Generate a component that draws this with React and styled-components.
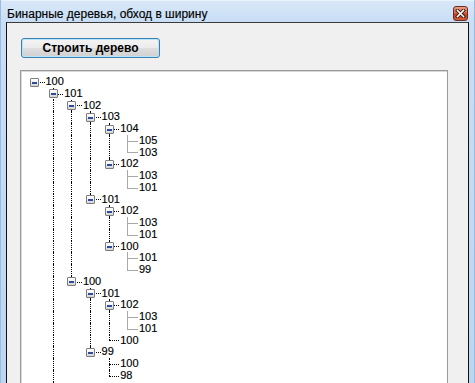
import React from 'react';
import styled, { createGlobalStyle } from 'styled-components';

const GlobalStyle = createGlobalStyle`
  html, body {
    margin: 0;
    padding: 0;
    width: 475px;
    height: 383px;
    overflow: hidden;
    background: #c6dcf3;
  }
  * { box-sizing: border-box; }
`;

const ROW_H = 11.76;
const INDENT = 18.7;
const VISIBLE_ROWS = 26;

const Window = styled.div`
  width: 475px;
  height: 383px;
  overflow: hidden;
  display: flex;
  flex-direction: column;
  padding: 0 6px;
  background: linear-gradient(180deg, #d9e8f8 0px, #c8def5 22px, #bcd6f1 100%);
  box-shadow: inset 1px 0 0 #9bbce0, inset -1px 0 0 #9bbce0, inset 0 1px 0 #eaf3fc;
`;

const TitleBar = styled.div`
  height: 22px;
  flex: none;
  display: flex;
  align-items: flex-end;
  justify-content: space-between;
  padding: 0 1px 0 1px;
`;

const Title = styled.div`
  font-family: "Liberation Sans", Arial, sans-serif;
  font-size: 12px;
  line-height: 16px;
  color: #000;
  white-space: nowrap;
  -webkit-text-stroke: 0.15px #000;
`;

const CloseButton = styled.div`
  width: 15px;
  height: 15px;
  margin-bottom: 1px;
  border: 1px solid #6e2a1c;
  border-radius: 3px;
  background: linear-gradient(180deg, #eb9c84 0%, #dc6a4c 45%, #c23e20 55%, #cf5a36 100%);
  display: flex;
  align-items: center;
  justify-content: center;
`;

const Client = styled.div`
  flex: 1;
  background: #f0f0f0;
  border: 1px solid #111;
  border-top-color: #3a3a3a;
  border-bottom: none;
  padding: 15px 20px 0 13px;
  display: flex;
  flex-direction: column;
  align-items: flex-start;
  min-height: 0;
`;

const BuildButton = styled.button`
  width: 139px;
  height: 20px;
  margin-left: 1px;
  padding: 0;
  border: 1px solid #3c7fb1;
  border-radius: 3px;
  background: linear-gradient(180deg, #f4f4f4 0%, #ececec 48%, #dedede 52%, #d0d0d0 100%);
  box-shadow: inset 0 0 0 1px #b6e6fb;
  font-family: "Liberation Sans", Arial, sans-serif;
  font-weight: bold;
  font-size: 12px;
  line-height: 18px;
  color: #000;
`;

const TreePanel = styled.div`
  margin-top: 12px;
  width: 428px;
  height: 340px;
  flex: none;
  background: #fff;
  border: 1px solid #9a9a9a;
  box-shadow: inset 1px 1px 0 #d8d8d8;
  padding: 5px 0 0 4px;
  overflow: hidden;
`;

const Row = styled.div`
  display: flex;
  height: ${ROW_H}px;
  align-items: stretch;
`;

const lineColor = (p) => (p.$faint ? '#a9a9a9' : '#000');
const lineStyle = (p) => (p.$faint ? 'solid' : 'dotted');

const Guide = styled.div`
  width: ${INDENT}px;
  flex: none;
  position: relative;
  &::before {
    content: '';
    display: ${(p) => (p.$line ? 'block' : 'none')};
    position: absolute;
    left: 9px;
    top: 0;
    bottom: 0;
    border-left: 1px ${lineStyle} ${lineColor};
  }
`;

const NodeCell = styled.div`
  width: 20.5px;
  flex: none;
  position: relative;
  &::before {
    content: '';
    display: ${(p) => (p.$up ? 'block' : 'none')};
    position: absolute;
    left: 9px;
    top: 0;
    height: 50%;
    border-left: 1px ${lineStyle} ${lineColor};
  }
  &::after {
    content: '';
    display: ${(p) => (p.$down ? 'block' : 'none')};
    position: absolute;
    left: 9px;
    top: 50%;
    bottom: 0;
    border-left: 1px ${lineStyle} ${lineColor};
  }
`;

const HLine = styled.span`
  position: absolute;
  left: 9px;
  right: 1px;
  top: 50%;
  border-top: 1px ${lineStyle} ${lineColor};
`;

const ExpandBox = styled.span`
  position: absolute;
  left: 5px;
  top: 1.5px;
  width: 9px;
  height: 9px;
  border: 1px solid #7c7c7c;
  border-radius: 1px;
  background: linear-gradient(180deg, #ffffff 0%, #f0f0f0 50%, #d2d2d2 100%);
  z-index: 1;
  &::after {
    content: '';
    position: absolute;
    left: 1px;
    top: 3px;
    width: 5px;
    height: 2px;
    background: #2f4c9c;
  }
`;

const Label = styled.span`
  font-family: "Liberation Sans", Arial, sans-serif;
  font-size: 11px;
  line-height: ${ROW_H}px;
  color: #000;
  white-space: nowrap;
  -webkit-text-stroke: 0.15px #000;
`;

const tree = {
  t: '100',
  c: [
    {
      t: '101',
      c: [
        {
          t: '102',
          c: [
            {
              t: '103',
              c: [
                { t: '104', c: [{ t: '105' }, { t: '103' }] },
                { t: '102', c: [{ t: '103' }, { t: '101' }] },
              ],
            },
            {
              t: '101',
              c: [
                { t: '102', c: [{ t: '103' }, { t: '101' }] },
                { t: '100', c: [{ t: '101' }, { t: '99' }] },
              ],
            },
          ],
        },
        {
          t: '100',
          c: [
            {
              t: '101',
              c: [
                { t: '102', c: [{ t: '103' }, { t: '101' }] },
                { t: '100' },
              ],
            },
            { t: '99', c: [{ t: '100' }, { t: '98' }] },
          ],
        },
      ],
    },
    {
      t: '99',
      c: [
        { t: '100', c: [{ t: '101' }, { t: '99' }] },
        { t: '98', c: [{ t: '99' }, { t: '97' }] },
      ],
    },
  ],
};

function flatten(node, level, guides, hasNext, out) {
  out.push({
    text: node.t,
    level,
    guides,
    hasNext,
    hasChildren: !!(node.c && node.c.length),
  });
  if (node.c) {
    const nextGuides = [...guides, level > 0 && hasNext];
    node.c.forEach((ch, i) => {
      flatten(ch, level + 1, nextGuides, i < node.c.length - 1, out);
    });
  }
  return out;
}

// only the rows that fit in the visible part of the tree view
const rows = flatten(tree, 0, [], false, []).slice(0, VISIBLE_ROWS);

const CloseIcon = () => (
  <svg width="11" height="9" viewBox="0 0 11 9">
    <path d="M2.5 1.5 L8.5 7.5 M8.5 1.5 L2.5 7.5" stroke="#3b1a14" strokeWidth="3.4" strokeLinecap="square" />
    <path d="M2.5 1.5 L8.5 7.5 M8.5 1.5 L2.5 7.5" stroke="#ffffff" strokeWidth="1.6" strokeLinecap="square" />
  </svg>
);

export default function App() {
  return (
    <>
      <GlobalStyle />
      <Window>
        <TitleBar>
          <Title>Бинарные деревья, обход в ширину</Title>
          <CloseButton>
            <CloseIcon />
          </CloseButton>
        </TitleBar>
        <Client>
          <BuildButton>Строить дерево</BuildButton>
          <TreePanel>
            {rows.map((r, i) => {
              const faint = r.level === 5;
              return (
                <Row key={i}>
                  {r.guides.map((g, gi) => (
                    <Guide key={gi} $line={g} $faint={gi === 5} />
                  ))}
                  <NodeCell $up={r.level > 0} $down={r.hasNext} $faint={faint}>
                    <HLine $faint={faint} />
                    {r.hasChildren && <ExpandBox />}
                  </NodeCell>
                  <Label>{r.text}</Label>
                </Row>
              );
            })}
            <Row>
              <Guide />
              <Guide $line />
            </Row>
          </TreePanel>
        </Client>
      </Window>
    </>
  );
}
